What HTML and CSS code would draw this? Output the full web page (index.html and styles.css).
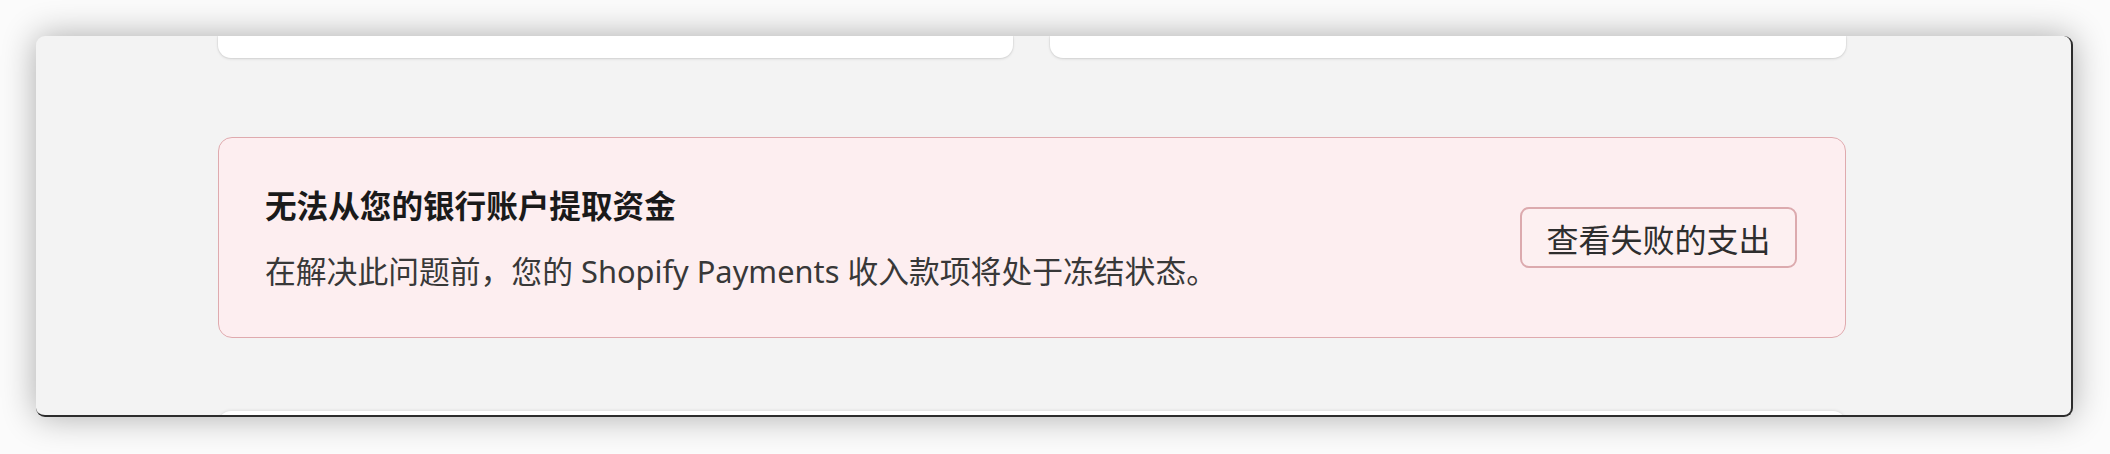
FILE: index.html
```html
<!DOCTYPE html>
<html lang="zh-CN">
<head>
<meta charset="utf-8">
<title>Shopify Payments</title>
<link rel="stylesheet" href="styles.css">
</head>
<body>
<div class="window">
  <div class="content">
    <div class="top-cards">
      <div class="card-stub"></div>
      <div class="card-stub"></div>
    </div>
    <div class="alert">
      <div class="alert-text">
        <h2 class="alert-title">无法从您的银行账户提取资金</h2>
        <p class="alert-body">在解决此问题前，您的 Shopify Payments 收入款项将处于冻结状态。</p>
      </div>
      <button class="alert-btn" type="button">查看失败的支出</button>
    </div>
    <div class="bottom-card"></div>
  </div>
</div>
</body>
</html>
```

FILE: styles.css
```css
html, body {
  margin: 0;
  padding: 0;
  background: #fbfbfb;
  width: 2110px;
  height: 454px;
  overflow: hidden;
}

body {
  padding: 36px 0 0 36px;
  box-sizing: border-box;
  font-family: "Noto Sans", "Noto Sans CJK SC", sans-serif;
}

.window {
  width: 2037px;
  height: 381px;
  box-sizing: border-box;
  background: #f3f3f3;
  border-radius: 9px;
  border-right: 2px solid #2c2c2c;
  border-bottom: 2px solid #2c2c2c;
  box-shadow: 0 0 34px rgba(0, 0, 0, 0.32);
  overflow: hidden;
}

.content {
  width: 1628px;
  margin-left: 182px;
}

.top-cards {
  display: grid;
  grid-template-columns: 795px 796px;
  column-gap: 37px;
}

.card-stub {
  height: 22px;
  background: #ffffff;
  border-radius: 0 0 13px 13px;
  box-shadow: 0 1px 3px rgba(0, 0, 0, 0.12), 0 0 0 1px rgba(0, 0, 0, 0.03);
}

.alert {
  margin-top: 79px;
  height: 201px;
  box-sizing: border-box;
  background: #fdeef0;
  border: 1.5px solid #dfaaae;
  border-radius: 14px;
  display: flex;
  align-items: center;
  justify-content: space-between;
  padding: 0 48px 0 46px;
}

.alert-text {
  display: flex;
  flex-direction: column;
  gap: 21px;
}

.alert-title {
  margin: 0;
  font-size: 31.6px;
  line-height: 46px;
  font-weight: 700;
  color: #1a1a1a;
  font-family: "Noto Sans CJK SC", sans-serif;
}

.alert-body {
  margin: 0;
  font-size: 30.8px;
  line-height: 46px;
  color: #383838;
  font-family: "Noto Sans", "Noto Sans CJK SC", sans-serif;
}

.alert-btn {
  width: 277px;
  height: 61px;
  box-sizing: border-box;
  background: #fdf0f1;
  border: 2px solid #dcaaae;
  border-radius: 9px;
  font-family: "Noto Sans CJK SC", sans-serif;
  font-size: 32px;
  color: #2e2e2e;
  padding: 0;
  line-height: 1;
}

.bottom-card {
  margin-top: 73px;
  height: 30px;
  background: #ffffff;
  border-radius: 13px 13px 0 0;
  box-shadow: 0 -1px 3px rgba(0, 0, 0, 0.08);
}
```
